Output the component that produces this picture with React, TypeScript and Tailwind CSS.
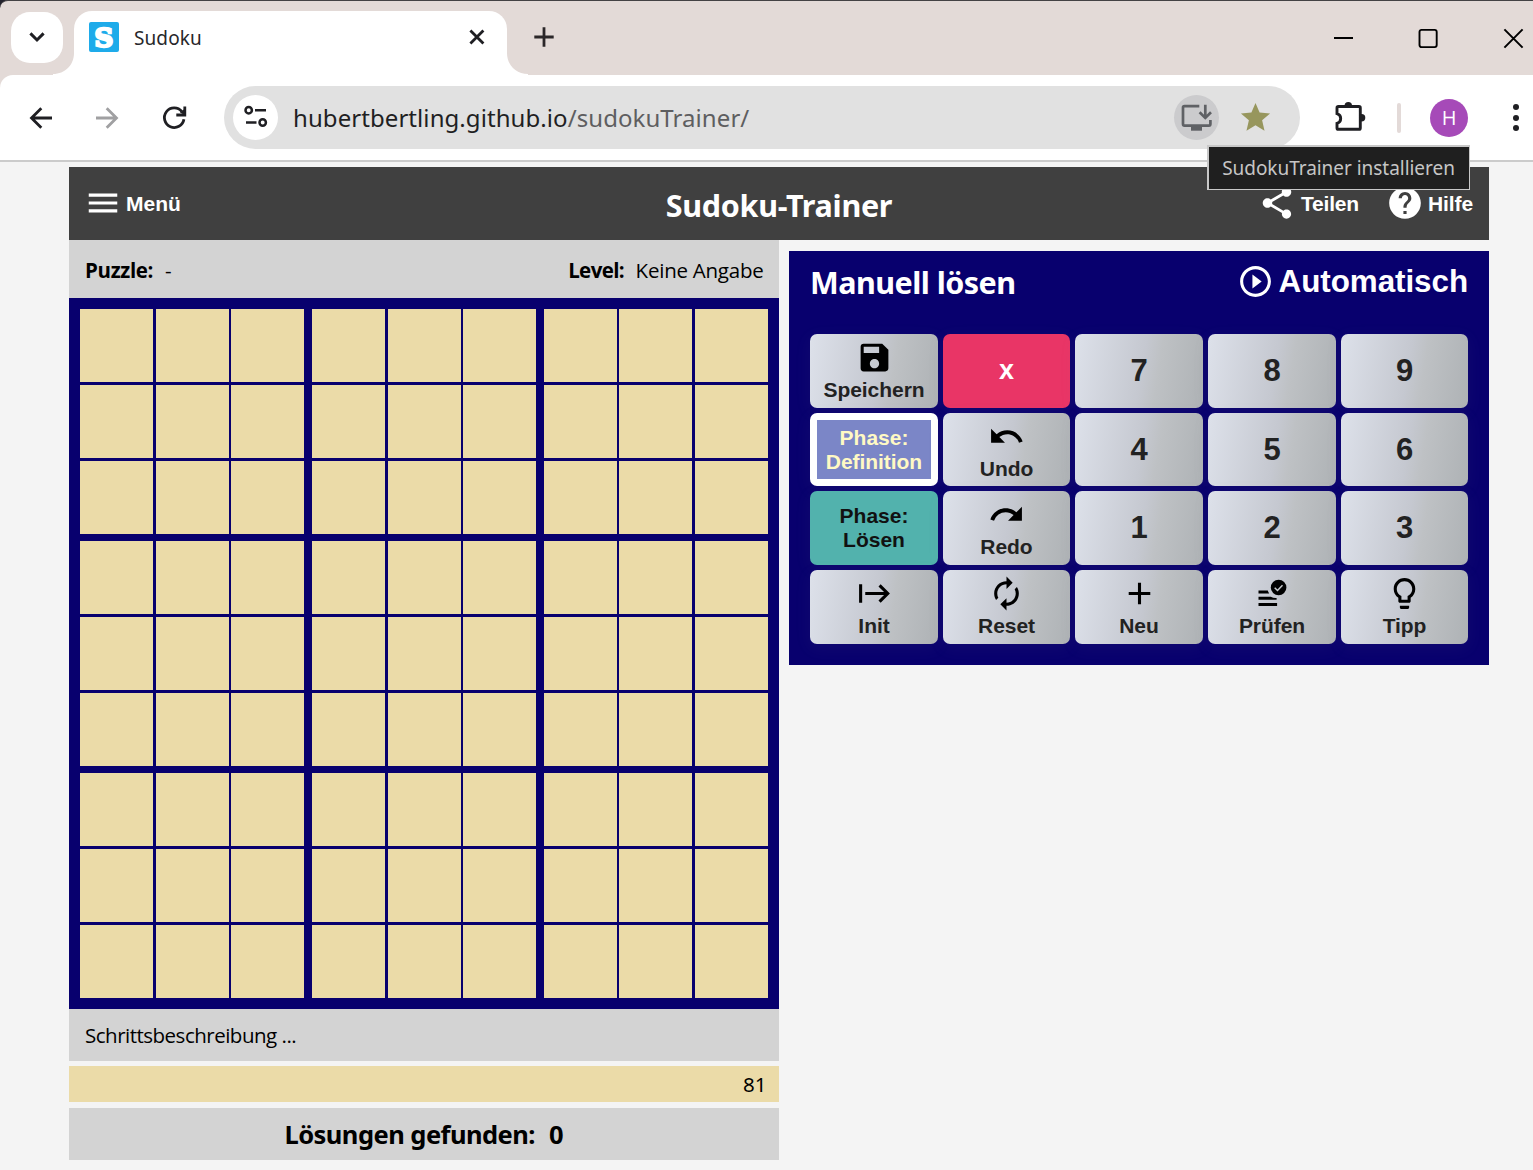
import type { ReactNode } from 'react';
import {
  MdAdd,
  MdAutorenew,
  MdHelp,
  MdLightbulbOutline,
  MdMenu,
  MdPlayCircleOutline,
  MdRedo,
  MdSave,
  MdShare,
  MdStar,
  MdStart,
  MdUndo,
} from 'react-icons/md';

function TabStrip() {
  return (
    <div className="bg-[#24232d]">
      <div className="flex h-[75px] overflow-hidden rounded-tl-[8px] border-t border-[#444244] bg-[#e3dad7] pl-[11px]">
        <button className="mt-[11px] flex h-[51px] w-[52px] shrink-0 items-center justify-center rounded-[19px] bg-white">
          <svg width="20" height="14" viewBox="0 0 20 14" fill="none" stroke="#1f1f23" strokeWidth="3">
            <path d="M3.4 2.4 10 9l6.6-6.6" />
          </svg>
        </button>
        <div className="relative ml-[11px] mt-[10px] flex h-[64px] w-[433px] shrink-0 rounded-t-[18px] bg-white pl-[15px] pr-[21px]">
          <svg className="absolute -left-[21px] bottom-0" width="22" height="22" viewBox="0 0 22 22" fill="#fff">
            <path d="M22 22V0h-1c0 12-9 21-21 21v1z" />
          </svg>
          <svg className="absolute -right-[21px] bottom-0" width="22" height="22" viewBox="0 0 22 22" fill="#fff">
            <path d="M0 22V0h1c0 12 9 21 21 21v1z" />
          </svg>
          <div className="mt-[11px] flex h-[30px] w-[30px] items-center justify-center rounded-[2px] bg-[#1eabea]">
            <span className="pt-px font-['DejaVu_Serif','Liberation_Serif',serif] text-[26px] font-bold leading-[30px] text-white [-webkit-text-stroke:2.4px_white]">
              S
            </span>
          </div>
          <span className="ml-[15px] mt-[12px] font-['Noto_Sans',sans-serif] text-[19px] leading-[30px] tracking-[0.1px] text-[#27272a]">
            Sudoku
          </span>
          <svg className="ml-auto mt-[17px]" width="18" height="18" viewBox="0 0 18 18" stroke="#1f1f23" strokeWidth="2.8">
            <path d="M2.4 2.4 15.4 15.4M15.4 2.4 2.4 15.4" />
          </svg>
        </div>
        <svg className="ml-[26px] mt-[25px]" width="22" height="22" viewBox="0 0 22 22" stroke="#2b2729" strokeWidth="2.8">
          <path d="M11 1.3v19.4M1.3 11h19.4" />
        </svg>
        <div className="ml-auto mt-[27px] flex shrink-0 gap-[64px] pr-[9px]">
          <svg width="21" height="21" viewBox="0 0 21 21" stroke="#000" strokeWidth="2">
            <path d="M1 10h19" />
          </svg>
          <svg width="21" height="21" viewBox="0 0 21 21" fill="none" stroke="#000" strokeWidth="1.9">
            <rect x="1.5" y="1.9" width="17.2" height="17.2" rx="2" />
          </svg>
          <svg width="21" height="21" viewBox="0 0 21 21" stroke="#000" strokeWidth="2">
            <path d="M1.4 1.4l18.2 18.2M19.6 1.4 1.4 19.6" />
          </svg>
        </div>
      </div>
    </div>
  );
}

function ArrowIcon({ className }: { className: string }) {
  return (
    <svg className={className} width="24" height="24" viewBox="0 0 24 24" fill="none" stroke="currentColor" strokeWidth="2.8">
      <path d="M23 12H3.2M12.3 2.2 2.5 12l9.8 9.8" />
    </svg>
  );
}

function Toolbar() {
  return (
    <div className="bg-[#e3dad7]">
      <div className="flex h-[85px] items-start rounded-tl-[13px] bg-white pt-[11px]">
        <div className="flex h-[63px] w-[224px] shrink-0 items-center">
          <ArrowIcon className="ml-[29px] text-[#1f1f23]" />
          <ArrowIcon className="ml-[42px] rotate-180 text-[#a0a0a2]" />
          <svg className="ml-[39px]" width="34" height="34" viewBox="0 0 34 34" fill="none" stroke="#1f1f23" strokeWidth="2.8">
            <path d="M25.9 18.2A9.8 9.8 0 1 1 23.9 10.6" />
            <path d="M26.8 5.4V14H18.3" />
            <path d="M22 11.5 26.5 14V8z" fill="#1f1f23" stroke="none" />
          </svg>
        </div>
        <div className="flex h-[63px] w-[1076px] shrink-0 items-center rounded-full bg-[#e1e1e1] pl-[9px] pr-[27px]">
          <div className="h-[45px] w-[45px] rounded-full bg-white">
            <svg width="45" height="45" viewBox="0 0 45 45" fill="none" stroke="#1f1f23" strokeWidth="2.5">
              <circle cx="15.7" cy="15.2" r="3.2" />
              <path d="M22 15.2h11M13 27.5h10.5" />
              <circle cx="29.7" cy="27.5" r="3.2" />
            </svg>
          </div>
          <span className="ml-[15px] whitespace-nowrap font-['Noto_Sans',sans-serif] text-[24px] leading-[36px] tracking-[0.07px] text-[#1f1f23]">
            hubertbertling.github.io<span className="text-[#5e5e60]">/sudokuTrainer/</span>
          </span>
          <div className="ml-auto h-[45px] w-[45px] rounded-full bg-[#cbcbcd]">
            <svg width="45" height="45" viewBox="0 0 45 45" fill="none" stroke="#5f6165" strokeWidth="2.7">
              <path d="M25.3 11.2H10.5Q9 11.2 9 12.7v16.4q0 1.5 1.5 1.5h24.4q1.5 0 1.5-1.5V25" />
              <path d="M31.3 9.7V22M25.6 17.2l5.7 5.7 5.7-5.7" />
              <path d="M17 31h11v4.7H17z" fill="#5f6165" stroke="none" />
            </svg>
          </div>
          <MdStar className="ml-[19px] h-[35px] w-[35px] text-[#97965d]" />
        </div>
        <div className="flex h-[63px] flex-1 items-center">
          <svg className="ml-[33px] shrink-0" width="34" height="34" viewBox="0 0 34 34" fill="none" stroke="#1f1f23" strokeWidth="2.9">
            <path d="M4 12.7V6.9q0-1.4 1.4-1.4h20.5q1.4 0 1.4 1.4v20q0 1.4-1.4 1.4H5.4Q4 28.3 4 26.9v-4.6c4.9-1.4 4.9-8.2 0-9.6z" />
            <path d="M11.6 4.6a3.7 3.7 0 0 1 7.4 0zM28 13.1h.6a3.7 3.7 0 0 1 0 7.4H28z" fill="#1f1f23" stroke="none" />
          </svg>
          <div className="ml-[30px] h-[30px] w-[4px] shrink-0 rounded-full bg-[#e3dad8]" />
          <div className="ml-[29px] flex h-[38px] w-[38px] shrink-0 items-center justify-center rounded-full bg-[#a64ab8] font-['Open_Sans',sans-serif] text-[20px] leading-none text-white">
            H
          </div>
          <div className="ml-[44.5px] flex shrink-0 flex-col gap-[4.5px]">
            <span className="h-[6px] w-[6px] rounded-full bg-[#1f1f23]" />
            <span className="h-[6px] w-[6px] rounded-full bg-[#1f1f23]" />
            <span className="h-[6px] w-[6px] rounded-full bg-[#1f1f23]" />
          </div>
        </div>
      </div>
      <div className="h-[2px] bg-[#cbcbcb]" />
    </div>
  );
}

function AppHeader() {
  return (
    <header className="grid h-[73px] grid-cols-[1fr_auto_1fr] items-center bg-[#404040] text-white">
      <button className="ml-[15px] flex items-center gap-[4px] justify-self-start rounded-lg">
        <MdMenu className="-mt-[2px] h-[38px] w-[38px]" />
        <span className="text-[21px] font-bold leading-6">Menü</span>
      </button>
      <h1 className="pt-[2px] font-['Noto_Sans',sans-serif] text-[30.5px] font-bold leading-9 tracking-[-0.28px]">
        Sudoku-Trainer
      </h1>
      <div className="mr-[16px] flex items-center gap-[27px] justify-self-end">
        <button className="flex items-center gap-[5px]">
          <MdShare className="-mt-[2px] h-[38px] w-[38px]" />
          <span className="text-[21px] font-bold leading-6 tracking-[-0.2px]">Teilen</span>
        </button>
        <button className="flex items-center gap-[4px]">
          <MdHelp className="-mt-[2px] h-[38px] w-[38px]" />
          <span className="text-[21px] font-bold leading-6 tracking-[-0.1px]">Hilfe</span>
        </button>
      </div>
    </header>
  );
}

function Board() {
  return (
    <div className="h-[711px] bg-[#08006e] p-[11px]">
      <div className="grid grid-cols-[76px_75px_81px_76px_75px_81px_75px_76px_73px] grid-rows-[76px_76px_80px_76px_76px_80px_76px_76px_73px]">
        {Array.from({ length: 81 }, (_, i) => (
          <div key={i} className="h-[73px] w-[73px] bg-[#ebdba8]" />
        ))}
      </div>
    </div>
  );
}

function BoardColumn() {
  return (
    <section className="w-[710px] shrink-0 font-['Open_Sans','Noto_Sans',sans-serif] text-[20.5px] text-black">
      <div className="flex h-[58px] items-center justify-between bg-[#d3d3d3] pl-[16px] pr-[15.5px] pt-[3px]">
        <div>
          <b className="tracking-[-0.35px]">Puzzle:</b>
          <span className="ml-[12px]">-</span>
        </div>
        <div>
          <b className="tracking-[-0.6px]">Level:</b>
          <span className="ml-[11.5px] tracking-[-0.24px]">Keine Angabe</span>
        </div>
      </div>
      <Board />
      <div className="flex h-[52px] items-center bg-[#d3d3d3] pl-[16px] pt-px tracking-[-0.5px]">
        Schrittsbeschreibung ...
      </div>
      <div className="mt-[5px] flex h-[36px] items-center justify-end bg-[#ebdba8] pr-[12.5px] pt-px font-['Noto_Sans',sans-serif]">
        81
      </div>
      <div className="mt-[6px] flex h-[52px] items-center justify-center gap-[14px] bg-[#d3d3d3] pt-px font-['Noto_Sans',sans-serif] text-[25.5px] font-bold">
        <span className="tracking-[-0.53px]">Lösungen gefunden:</span>
        <span>0</span>
      </div>
    </section>
  );
}

function CheckListIcon() {
  return (
    <svg className="h-[37px] w-[37px]" viewBox="0 0 37 37" fill="none">
      <path d="M4.5 15.6h9.3q.4 1.6 1.4 3H4.5zM4.5 21.8h12.3q2.4 1.5 5.8 1.3v1.7H4.5zM4.5 28h18.6v3H4.5z" fill="#000" />
      <circle cx="24.6" cy="12.5" r="7.8" fill="#000" />
      <path d="M20.7 12.7l2.8 2.8 5-5.2" stroke="#c5c8cc" strokeWidth="1.5" />
    </svg>
  );
}

const KEY =
  'flex flex-col items-center justify-center rounded-[7px] text-[21px] font-bold leading-6 text-[#222] shadow-[0_4px_16px_2px_rgba(150,130,150,0.06)]';
const SILVER = 'bg-[linear-gradient(99deg,#dde1ea_0%,#c5c8d0_52%,#bec1c4_64%,#aeb2b5_100%)]';

function IconKey({ icon, label }: { icon: ReactNode; label: string }) {
  return (
    <button className={`${KEY} ${SILVER} gap-[2px] pb-px`}>
      <span className="text-black">{icon}</span>
      <span className="tracking-[-0.05px]">{label}</span>
    </button>
  );
}

function DigitKey({ digit }: { digit: number }) {
  return (
    <button className={`${KEY} ${SILVER}`}>
      <span className="text-[31px] leading-9">{digit}</span>
    </button>
  );
}

function ControlPanel() {
  const icon = 'h-[37px] w-[37px]';
  return (
    <section className="ml-[10px] mt-[11px] h-[414px] w-[700px] bg-[#08006e] px-[21px]">
      <div className="flex h-[61px] items-center justify-between text-white">
        <h2 className="font-['Noto_Sans',sans-serif] text-[30.5px] font-bold leading-9 tracking-[-0.54px]">
          Manuell lösen
        </h2>
        <button className="flex items-center gap-[5px]">
          <MdPlayCircleOutline className="h-[37px] w-[37px]" />
          <span className="text-[31.4px] font-bold leading-9 tracking-[-0.06px]">Automatisch</span>
        </button>
      </div>
      <div className="mt-[22px] grid grid-cols-[128px_127px_128px_128px_127px] grid-rows-[74px_73px_74px_74px] gap-[5px]">
        <IconKey icon={<MdSave className={icon} />} label="Speichern" />
        <button className={`${KEY} bg-[#e93566] pb-[3px]`}>
          <span className="text-[27px] text-white">x</span>
        </button>
        <DigitKey digit={7} />
        <DigitKey digit={8} />
        <DigitKey digit={9} />

        <button className={`${KEY} bg-white p-[7px]`}>
          <span className="flex h-full w-full flex-col items-center justify-center bg-[#7b86c7] text-[#fff9c4]">
            <span>Phase:</span>
            <span className="tracking-[-0.05px]">Definition</span>
          </span>
        </button>
        <IconKey icon={<MdUndo className={icon} />} label="Undo" />
        <DigitKey digit={4} />
        <DigitKey digit={5} />
        <DigitKey digit={6} />

        <button className={`${KEY} bg-[#52b2ad]`}>
          <span className="text-[#111]">Phase:</span>
          <span className="text-[#111]">Lösen</span>
        </button>
        <IconKey icon={<MdRedo className={icon} />} label="Redo" />
        <DigitKey digit={1} />
        <DigitKey digit={2} />
        <DigitKey digit={3} />

        <IconKey icon={<MdStart className={icon} />} label="Init" />
        <IconKey icon={<MdAutorenew className={icon} />} label="Reset" />
        <IconKey icon={<MdAdd className={icon} />} label="Neu" />
        <IconKey icon={<CheckListIcon />} label="Prüfen" />
        <IconKey icon={<MdLightbulbOutline className={icon} />} label="Tipp" />
      </div>
    </section>
  );
}

export default function App() {
  return (
    <div className="relative h-[1170px] w-[1533px] overflow-hidden bg-[#f4f4f4] font-['Liberation_Sans',Arial,sans-serif]">
      <TabStrip />
      <Toolbar />
      <main className="ml-[69px] mt-[5px] w-[1420px]">
        <AppHeader />
        <div className="flex items-start">
          <BoardColumn />
          <ControlPanel />
        </div>
      </main>
      <div className="absolute left-[1207px] top-[145px] flex h-[45px] w-[263px] items-center justify-center border-b border-l-2 border-r border-t-2 border-[#c8c8c8] bg-[#1f1f1f] pr-px font-['Noto_Sans',sans-serif] text-[19px] leading-none tracking-[-0.04px] text-[#c6c6c6]">
        SudokuTrainer installieren
      </div>
    </div>
  );
}
